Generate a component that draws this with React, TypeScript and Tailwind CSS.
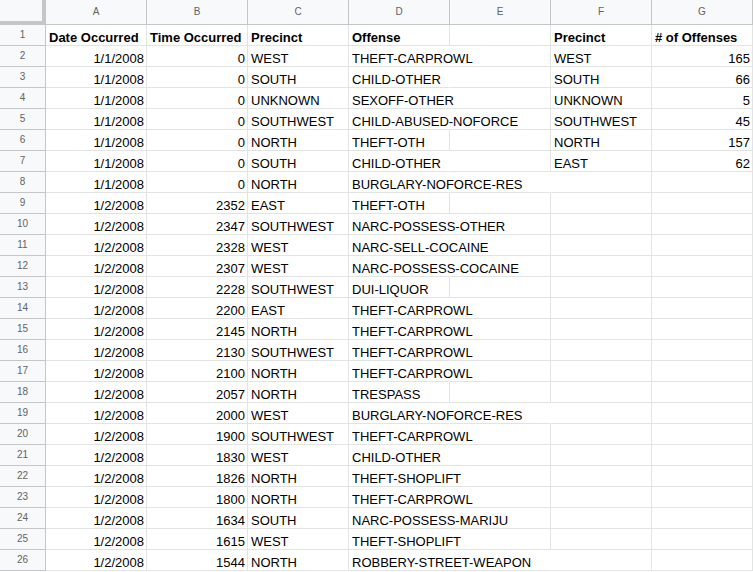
import React from "react";

type Row = {
  date: string;
  time: string;
  precinct: string;
  offense: string;
  f?: string;
  g?: string;
};

const COLS = ["A", "B", "C", "D", "E", "F", "G"];

const rows: Row[] = [
  { date: "1/1/2008", time: "0", precinct: "WEST", offense: "THEFT-CARPROWL", f: "WEST", g: "165" },
  { date: "1/1/2008", time: "0", precinct: "SOUTH", offense: "CHILD-OTHER", f: "SOUTH", g: "66" },
  { date: "1/1/2008", time: "0", precinct: "UNKNOWN", offense: "SEXOFF-OTHER", f: "UNKNOWN", g: "5" },
  { date: "1/1/2008", time: "0", precinct: "SOUTHWEST", offense: "CHILD-ABUSED-NOFORCE", f: "SOUTHWEST", g: "45" },
  { date: "1/1/2008", time: "0", precinct: "NORTH", offense: "THEFT-OTH", f: "NORTH", g: "157" },
  { date: "1/1/2008", time: "0", precinct: "SOUTH", offense: "CHILD-OTHER", f: "EAST", g: "62" },
  { date: "1/1/2008", time: "0", precinct: "NORTH", offense: "BURGLARY-NOFORCE-RES" },
  { date: "1/2/2008", time: "2352", precinct: "EAST", offense: "THEFT-OTH" },
  { date: "1/2/2008", time: "2347", precinct: "SOUTHWEST", offense: "NARC-POSSESS-OTHER" },
  { date: "1/2/2008", time: "2328", precinct: "WEST", offense: "NARC-SELL-COCAINE" },
  { date: "1/2/2008", time: "2307", precinct: "WEST", offense: "NARC-POSSESS-COCAINE" },
  { date: "1/2/2008", time: "2228", precinct: "SOUTHWEST", offense: "DUI-LIQUOR" },
  { date: "1/2/2008", time: "2200", precinct: "EAST", offense: "THEFT-CARPROWL" },
  { date: "1/2/2008", time: "2145", precinct: "NORTH", offense: "THEFT-CARPROWL" },
  { date: "1/2/2008", time: "2130", precinct: "SOUTHWEST", offense: "THEFT-CARPROWL" },
  { date: "1/2/2008", time: "2100", precinct: "NORTH", offense: "THEFT-CARPROWL" },
  { date: "1/2/2008", time: "2057", precinct: "NORTH", offense: "TRESPASS" },
  { date: "1/2/2008", time: "2000", precinct: "WEST", offense: "BURGLARY-NOFORCE-RES" },
  { date: "1/2/2008", time: "1900", precinct: "SOUTHWEST", offense: "THEFT-CARPROWL" },
  { date: "1/2/2008", time: "1830", precinct: "WEST", offense: "CHILD-OTHER" },
  { date: "1/2/2008", time: "1826", precinct: "NORTH", offense: "THEFT-SHOPLIFT" },
  { date: "1/2/2008", time: "1800", precinct: "NORTH", offense: "THEFT-CARPROWL" },
  { date: "1/2/2008", time: "1634", precinct: "SOUTH", offense: "NARC-POSSESS-MARIJU" },
  { date: "1/2/2008", time: "1615", precinct: "WEST", offense: "THEFT-SHOPLIFT" },
  { date: "1/2/2008", time: "1544", precinct: "NORTH", offense: "ROBBERY-STREET-WEAPON" },
];

// offenses short enough that the D|E line still shows
const SHORT = ["THEFT-OTH", "DUI-LIQUOR", "TRESPASS"];
// long ones that also run over the E|F line
const LONG = ["BURGLARY-NOFORCE-RES", "ROBBERY-STREET-WEAPON"];

function Cell({
  children,
  right,
  bold,
  hideRight,
}: {
  children?: React.ReactNode;
  right?: boolean;
  bold?: boolean;
  hideRight?: boolean;
}) {
  return (
    <div
      className={`flex h-[21px] w-[101px] flex-none items-end whitespace-nowrap border-b border-r border-b-[#e2e3e3] text-[13px] leading-[15px] text-black ${
        hideRight ? "border-r-transparent" : "border-r-[#e2e3e3]"
      } ${right ? "justify-end pr-[2px]" : "pl-[3px]"} ${bold ? "font-bold" : ""}`}
    >
      <span className="relative z-10">{children}</span>
    </div>
  );
}

function RowNum({ n }: { n: number }) {
  return (
    <div className="flex h-[21px] w-[46px] flex-none items-center justify-center border-b border-r border-[#c4c7c5] bg-[#f8f9fa] text-[10px] leading-[12px] text-[#5f6368]">
      {n}
    </div>
  );
}

export default function App() {
  return (
    <div className="h-[572px] w-[753px] overflow-hidden bg-white font-['Liberation_Sans',Arial,sans-serif]">
      {/* column letters */}
      <div className="flex">
        <div className="h-[25px] w-[46px] flex-none border-b-4 border-r-4 border-[#c4c7c5] bg-[#f8f9fa]"></div>
        {COLS.map((c) => (
          <div
            key={c}
            className="flex h-[25px] w-[101px] flex-none items-center justify-center border-b border-r border-[#c4c7c5] bg-[#f8f9fa] text-[10px] leading-[12px] text-[#5f6368]"
          >
            {c}
          </div>
        ))}
      </div>

      {/* header row */}
      <div className="flex">
        <RowNum n={1} />
        <Cell bold>Date Occurred</Cell>
        <Cell bold>Time Occurred</Cell>
        <Cell bold>Precinct</Cell>
        <Cell bold>Offense</Cell>
        <Cell />
        <Cell bold>Precinct</Cell>
        <Cell bold># of Offenses</Cell>
      </div>

      {rows.map((r, i) => {
        const short = SHORT.includes(r.offense);
        const long = LONG.includes(r.offense) && !r.f;
        return (
          <div key={i} className="flex">
            <RowNum n={i + 2} />
            <Cell right>{r.date}</Cell>
            <Cell right>{r.time}</Cell>
            <Cell>{r.precinct}</Cell>
            <Cell hideRight={!short}>{r.offense}</Cell>
            <Cell hideRight={long} />
            <Cell>{r.f}</Cell>
            <Cell right>{r.g}</Cell>
          </div>
        );
      })}
    </div>
  );
}
